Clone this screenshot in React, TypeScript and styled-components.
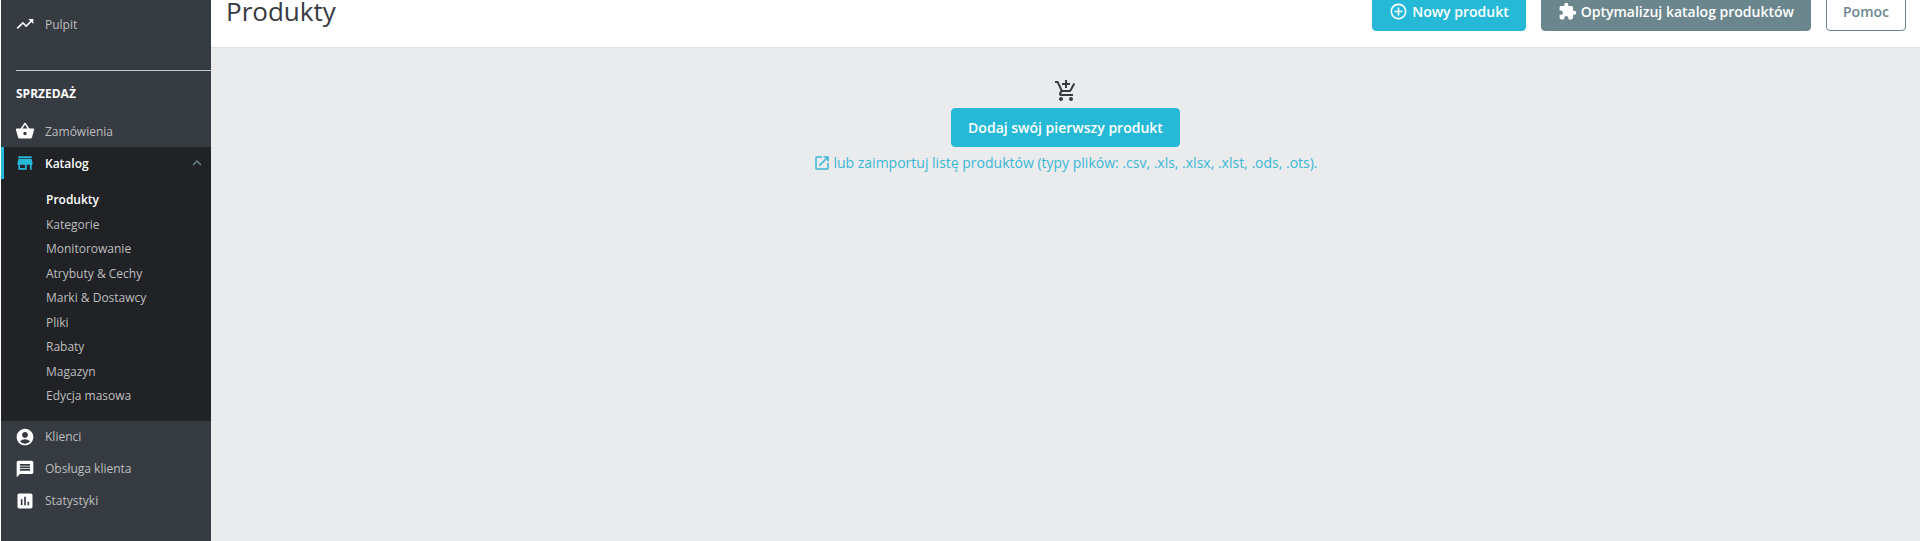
import React from "react";
import styled, { createGlobalStyle } from "styled-components";
import {
  MdTrendingUp,
  MdShoppingBasket,
  MdStore,
  MdAccountCircle,
  MdMessage,
  MdAssessment,
  MdAddCircleOutline,
  MdExtension,
  MdAddShoppingCart,
  MdOpenInNew,
  MdKeyboardArrowUp,
} from "react-icons/md";

const GlobalStyle = createGlobalStyle`
  html, body {
    margin: 0;
    padding: 0;
    height: 541px;
    overflow: hidden;
    background: #eaebec;
    font-family: "Open Sans", "Liberation Sans", sans-serif;
  }
`;

// Layout
const Page = styled.div`
  display: flex;
  height: 541px;
  padding-left: 1px;
  background: #fff;
`;

const Sidebar = styled.nav`
  width: 210px;
  flex-shrink: 0;
  background: #363a41;
  display: flex;
  flex-direction: column;
`;

const Main = styled.main`
  flex-grow: 1;
  min-width: 0;
  display: flex;
  flex-direction: column;
  background: #eaebec;
`;

// Sidebar parts
const NavRow = styled.div<{ $active?: boolean }>`
  height: 32px;
  display: flex;
  align-items: center;
  padding-left: ${(p) => (p.$active ? "11px" : "14px")};
  font-size: 12px;
  color: ${(p) => (p.$active ? "#fff" : "#bebebe")};
  font-weight: ${(p) => (p.$active ? 600 : 400)};
  background: ${(p) => (p.$active ? "#202226" : "transparent")};
  border-left: ${(p) => (p.$active ? "3px solid #25b9d7" : "none")};
  svg {
    font-size: 20px;
    flex-shrink: 0;
    margin-right: 10px;
    color: ${(p) => (p.$active ? "#25b9d7" : "#fff")};
  }
`;

const Chevron = styled.span`
  margin-left: auto;
  display: flex;
  svg {
    font-size: 18px;
    margin-right: 5px;
    color: #6c868e;
  }
`;

const Divider = styled.div`
  height: 1px;
  margin: 30px 0 0 15px;
  background: #bbcdd2;
`;

const SectionTitle = styled.div`
  margin: 15px 0 13px 15px;
  height: 16px;
  line-height: 16px;
  font-size: 12px;
  font-weight: 700;
  color: #fff;
  text-transform: uppercase;
`;

const TopGroup = styled.div`
  padding-top: 8px;
`;

const SubMenu = styled.div`
  background: #202226;
  padding: 9px 0 12px 45px;
`;

const SubItem = styled.div<{ $active?: boolean }>`
  height: 24.5px;
  line-height: 24.5px;
  font-size: 12px;
  color: ${(p) => (p.$active ? "#fff" : "#bebebe")};
  font-weight: ${(p) => (p.$active ? 600 : 400)};
`;

// Header parts
const Header = styled.header`
  height: 47px;
  flex-shrink: 0;
  box-sizing: border-box;
  background: #fff;
  overflow: hidden;
  display: flex;
  justify-content: space-between;
  align-items: flex-end;
  padding: 0 14px 16px 15px;
`;

const Title = styled.h1`
  margin: 0 0 2px;
  font-size: 26px;
  line-height: 36px;
  font-weight: 400;
  color: #363a41;
`;

const Actions = styled.div`
  display: flex;
  gap: 15px;
`;

const Button = styled.button<{ $variant: "primary" | "grey" | "outline" }>`
  height: 39px;
  display: flex;
  align-items: center;
  justify-content: center;
  box-sizing: border-box;
  padding: 0 16px;
  border-radius: 4px;
  font-family: inherit;
  font-size: 14px;
  font-weight: 600;
  white-space: nowrap;
  border: 1px solid ${(p) => (p.$variant === "primary" ? "#25b9d7" : "#6c868e")};
  background: ${(p) => (p.$variant === "primary" ? "#25b9d7" : p.$variant === "grey" ? "#6c868e" : "#fff")};
  color: ${(p) => (p.$variant === "outline" ? "#6c868e" : "#fff")};
  svg {
    font-size: 19px;
    margin-right: 4px;
  }
`;

const HeaderLine = styled.div`
  height: 1px;
  flex-shrink: 0;
  background: #dfdfdf;
`;

// Empty state
const EmptyState = styled.div`
  display: flex;
  flex-direction: column;
  align-items: center;
  padding-top: 31px;
`;

const CartIcon = styled(MdAddShoppingCart)`
  font-size: 24px;
  color: #363a41;
  margin-bottom: 5px;
`;

const ImportLink = styled.a`
  display: flex;
  align-items: center;
  margin-top: 6px;
  font-size: 14px;
  line-height: 19px;
  color: #3ab7d6;
  svg {
    font-size: 18px;
    margin-right: 2px;
  }
`;

const subItems = [
  "Produkty",
  "Kategorie",
  "Monitorowanie",
  "Atrybuty & Cechy",
  "Marki & Dostawcy",
  "Pliki",
  "Rabaty",
  "Magazyn",
  "Edycja masowa",
];

const App: React.FC = () => {
  return (
    <>
      <GlobalStyle />
      <Page>
        <Sidebar>
          <TopGroup>
            <NavRow>
              <MdTrendingUp />
              Pulpit
            </NavRow>
          </TopGroup>
          <Divider />
          <SectionTitle>Sprzedaż</SectionTitle>
          <NavRow>
            <MdShoppingBasket />
            Zamówienia
          </NavRow>
          <NavRow $active>
            <MdStore />
            Katalog
            <Chevron>
              <MdKeyboardArrowUp />
            </Chevron>
          </NavRow>
          <SubMenu>
            {subItems.map((item, i) => (
              <SubItem key={item} $active={i === 0}>
                {item}
              </SubItem>
            ))}
          </SubMenu>
          <NavRow>
            <MdAccountCircle />
            Klienci
          </NavRow>
          <NavRow>
            <MdMessage />
            Obsługa klienta
          </NavRow>
          <NavRow>
            <MdAssessment />
            Statystyki
          </NavRow>
        </Sidebar>
        <Main>
          <Header>
            <Title>Produkty</Title>
            <Actions>
              <Button $variant="primary">
                <MdAddCircleOutline />
                Nowy produkt
              </Button>
              <Button $variant="grey">
                <MdExtension />
                Optymalizuj katalog produktów
              </Button>
              <Button $variant="outline">Pomoc</Button>
            </Actions>
          </Header>
          <HeaderLine />
          <EmptyState>
            <CartIcon />
            <Button $variant="primary">Dodaj swój pierwszy produkt</Button>
            <ImportLink>
              <MdOpenInNew />
              lub zaimportuj listę produktów (typy plików: .csv, .xls, .xlsx, .xlst, .ods, .ots).
            </ImportLink>
          </EmptyState>
        </Main>
      </Page>
    </>
  );
};

export default App;
